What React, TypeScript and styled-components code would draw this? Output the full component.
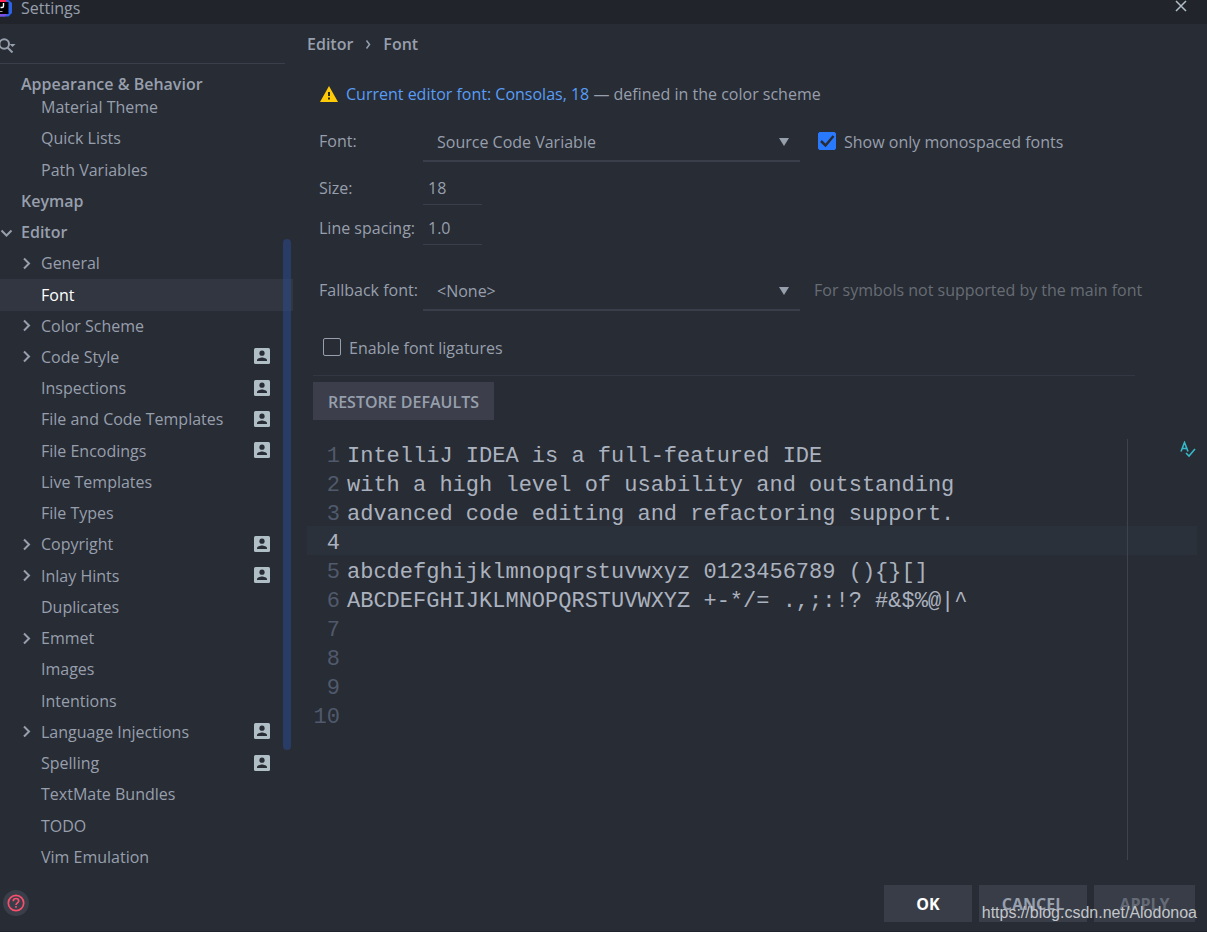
import React from "react";
import styled, { createGlobalStyle, css } from "styled-components";

const ui = `"Open Sans", "Noto Sans", sans-serif`;
const mono = `"Liberation Mono", "Courier New", monospace`;

const Global = createGlobalStyle`
  *, *::before, *::after { box-sizing: border-box; }
  body { margin: 0; background: #282c34; color: #979fad; font: 16px/20px ${ui}; }
  button, input, select, textarea { font: inherit; color: inherit; margin: 0; }
  h1, h2, ul, ol, p { margin: 0; padding: 0; list-style: none; font-size: inherit; }
`;

const Dialog = styled.div`
  min-height: 100vh;
  display: flex;
  flex-direction: column;
  position: relative;
  border-bottom: 1px solid #21252b;
`;

const TitleBar = styled.header`
  height: 24px;
  display: flex;
  align-items: flex-start;
  background: #21252b;
  h1 { font-weight: 400; line-height: 16px; margin-left: 9px; flex: 1; }
`;

const IconButton = styled.button`
  border: 0;
  padding: 0;
  background: none;
  display: flex;
`;

const CloseButton = styled(IconButton)`
  padding: 0 19px 0 0;
`;

const Body = styled.div`
  flex: 1;
  display: flex;
`;

const Sidebar = styled.aside`
  flex: 0 0 293px;
  display: flex;
  flex-direction: column;
  position: relative;
`;

const Search = styled.label`
  height: 40px;
  margin-right: 8px;
  display: flex;
  align-items: center;
  border-bottom: 1px solid #3a3e4a;
  input { flex: 1; min-width: 0; border: 0; background: none; outline: 0; }
`;

const GroupHead = styled.h2`
  height: 28px;
  padding: 10px 0 0 21px;
  line-height: 20px;
  font-weight: 600;
`;

const Tree = styled.ul`
  flex: 1;
  display: flex;
  flex-direction: column;
`;

const Row = styled.li<{ $top?: boolean; $selected?: boolean }>`
  flex: 1 0 31px;
  display: flex;
  align-items: center;
  padding-right: 23px;
  padding-left: ${(p) => (p.$top ? 0 : 20)}px;
  ${(p) => p.$top && css`font-weight: 600;`}
  ${(p) => p.$selected && css`background: #323640; color: #fff;`}
`;

const Twist = styled.span`
  width: 21px;
  display: flex;
`;

const Name = styled.span`
  flex: 1;
  padding-bottom: 1px;
`;

const ScrollThumb = styled.div`
  position: absolute;
  top: 215px;
  bottom: 123px;
  right: 2px;
  width: 8px;
  border-radius: 4px;
  background: rgba(41, 75, 150, 0.5);
`;

const Content = styled.main`
  flex: 1;
  min-width: 0;
  display: flex;
  flex-direction: column;
  padding: 0 10px 13px 14px;
`;

const Crumbs = styled.nav`
  height: 40px;
  display: flex;
  align-items: center;
  gap: 12px;
  font-weight: 600;
`;

const Notice = styled.p`
  height: 60px;
  padding-left: 12px;
  display: flex;
  align-items: center;
  gap: 7px;
  a { color: #589df6; text-decoration: none; }
`;

const Form = styled.div`
  display: grid;
  grid-template-columns: 104px 377px 1fr;
  grid-template-rows: 38px 43px 40px 66px;
  padding-left: 12px;
  align-items: end;
`;

const FieldLabel = styled.label<{ $compact?: boolean }>`
  height: ${(p) => (p.$compact ? 27 : 31)}px;
`;

const SelectBox = styled.div`
  position: relative;
  border-bottom: 2px solid #3a3e4a;
  select {
    appearance: none;
    display: block;
    width: 100%;
    height: 36px;
    padding: 0 30px 0 14px;
    border: 0;
    outline: 0;
    background: none;
  }
  svg { position: absolute; right: 11px; top: 14px; pointer-events: none; }
`;

const NumberInput = styled.input`
  grid-column: 2 / 4;
  width: 59px;
  height: 33px;
  padding: 0 5px;
  border: 0;
  border-bottom: 1px solid #3a3e4a;
  outline: 0;
  background: none;
`;

const CheckLabel = styled.label<{ $inset?: boolean }>`
  height: 30px;
  padding-left: ${(p) => (p.$inset ? 18 : 0)}px;
  display: flex;
  gap: 8px;
  input {
    appearance: none;
    width: 18px;
    height: 18px;
    border: 1px solid #979fad;
    border-radius: 2px;
  }
  input:checked {
    border-color: #2979ff;
    background: #2979ff;
  }
`;

const CheckBox = styled.span`
  position: relative;
  display: flex;
  svg { position: absolute; left: 0; top: 0; }
`;

const Hint = styled.p`
  height: 31px;
  padding-left: 14px;
  color: #676c75;
`;

const Ligatures = styled.div`
  margin: 0 62px 0 6px;
  height: 65px;
  padding: 27px 10px 0;
  border-bottom: 1px solid #323741;
`;

const PushButton = styled.button<{ $width: number; $tone?: string }>`
  width: ${(p) => p.$width}px;
  height: 37px;
  border: 0;
  padding: 2px 0 0;
  background: #383d48;
  font-weight: 700;
  color: ${(p) => p.$tone || "#979fad"};
`;

const RestoreButton = styled(PushButton)`
  height: 38px;
  margin: 6px 0 19px 6px;
  background: #3c3f4b;
  font-weight: 600;
`;

const Editor = styled.section`
  flex: 1;
  display: flex;
  position: relative;
  font: 22px/29px ${mono};
`;

const CurrentLine = styled.div`
  position: absolute;
  top: 87px;
  left: 0;
  right: 0;
  height: 29px;
  background: #2b313a;
`;

const Gutter = styled.ol`
  position: relative;
  width: 33px;
  && { padding-top: 3px; }
  display: flex;
  flex-direction: column;
  align-items: flex-end;
`;

const LineNumber = styled.li<{ $current?: boolean }>`
  color: ${(p) => (p.$current ? "#abb2bf" : "#505a6c")};
`;

const CodeArea = styled.textarea`
  position: relative;
  flex: 1;
  min-width: 0;
  padding: 3px 0 0 7px;
  border: 0;
  border-right: 1px solid #3f434c;
  outline: 0;
  resize: none;
  overflow: hidden;
  background: none;
  color: #abb2bf;
  white-space: pre;
`;

const Stripe = styled.div`
  position: relative;
  display: flex;
  align-items: flex-start;
  width: 69px;
  padding: 2px 0 0 52px;
`;

const Footer = styled.footer`
  height: 58px;
  display: flex;
  align-items: center;
  gap: 7px;
  padding: 2px 12px 0 3px;
`;

const HelpButton = styled(IconButton)`
  margin-right: auto;
`;

const Watermark = styled.div`
  position: absolute;
  right: 10px;
  bottom: 8px;
  color: #c3c6cb;
  font: 16px/20px "Liberation Sans", Arial, sans-serif;
  pointer-events: none;
`;

type Item = { name: string; top?: boolean; twist?: "open" | "closed"; badge?: boolean; selected?: boolean };

const items: Item[] = [
  { name: "Material Theme" },
  { name: "Quick Lists" },
  { name: "Path Variables" },
  { name: "Keymap", top: true },
  { name: "Editor", top: true, twist: "open" },
  { name: "General", twist: "closed" },
  { name: "Font", selected: true },
  { name: "Color Scheme", twist: "closed" },
  { name: "Code Style", twist: "closed", badge: true },
  { name: "Inspections", badge: true },
  { name: "File and Code Templates", badge: true },
  { name: "File Encodings", badge: true },
  { name: "Live Templates" },
  { name: "File Types" },
  { name: "Copyright", twist: "closed", badge: true },
  { name: "Inlay Hints", twist: "closed", badge: true },
  { name: "Duplicates" },
  { name: "Emmet", twist: "closed" },
  { name: "Images" },
  { name: "Intentions" },
  { name: "Language Injections", twist: "closed", badge: true },
  { name: "Spelling", badge: true },
  { name: "TextMate Bundles" },
  { name: "TODO" },
  { name: "Vim Emulation" },
];

const sample = `IntelliJ IDEA is a full-featured IDE
with a high level of usability and outstanding
advanced code editing and refactoring support.

abcdefghijklmnopqrstuvwxyz 0123456789 (){}[]
ABCDEFGHIJKLMNOPQRSTUVWXYZ +-*/= .,;:!? #&$%@|^`;

const Chevron = ({ open }: { open?: boolean }) => (
  <svg width="13" height="14" viewBox="0 0 13 14" fill="none" stroke="#979fad" strokeWidth="2">
    <path d={open ? "M1.5 4.5l5 5 5-5" : "M4 1.5l5 5-5 5"} />
  </svg>
);

const Badge = () => (
  <svg width="16" height="18" viewBox="0 0 16 18">
    <rect y="0" width="16" height="16" rx="1.5" fill="#b0bec5" />
    <circle cx="8" cy="5.2" r="2.6" fill="#282c34" />
    <path d="M3 13v-.8c0-1.8 3.3-2.7 5-2.7s5 .9 5 2.7v.8z" fill="#282c34" />
  </svg>
);

const Arrow = () => (
  <svg width="10" height="8" viewBox="0 0 10 8"><path d="M0 0h10L5 8z" fill="#979fad" /></svg>
);

export default function App() {
  return (
    <>
      <Global />
      <Dialog>
        <TitleBar>
          <svg width="12" height="17" viewBox="0 0 12 17">
            <path d="M0 0h8.500L12 3v10l-3.500 3.500H0z" fill="#2b62e8" />
            <path d="M0 0h6l1 3H0z" fill="#fe2857" />
            <path d="M0 13h8l-3 3.500H0z" fill="#7b4fe0" />
            <path d="M0 2h8.500v12H0z" fill="#000" />
            <path d="M0 11.500h2.500" stroke="#aaa" />
            <path d="M3.500 3v3q0 1.500-1.500 1.500H.5" fill="none" stroke="#fff" strokeWidth="1.400" />
          </svg>
          <h1>Settings</h1>
          <CloseButton aria-label="Close">
            <svg width="14" height="13" viewBox="0 0 14 13" stroke="#b0bec5" strokeWidth="1.500">
              <path d="M2 1l10 10M12 1L2 11" />
            </svg>
          </CloseButton>
        </TitleBar>
        <Body>
          <Sidebar>
            <Search>
              <svg width="17" height="18" viewBox="0 0 17 18" fill="none" stroke="#979fad" strokeWidth="2">
                <circle cx="4.200" cy="9" r="4.800" />
                <path d="M7.500 12.500l5 5" />
                <path d="M9.500 9h6l-3 3z" fill="#979fad" stroke="none" />
              </svg>
              <input aria-label="Search settings" />
            </Search>
            <GroupHead>Appearance &amp; Behavior</GroupHead>
            <Tree>
              {items.map((it) => (
                <Row key={it.name} $top={it.top} $selected={it.selected}>
                  <Twist>{it.twist && <Chevron open={it.twist === "open"} />}</Twist>
                  <Name>{it.name}</Name>
                  {it.badge && <Badge />}
                </Row>
              ))}
            </Tree>
            <ScrollThumb />
          </Sidebar>
          <Content>
            <Crumbs>
              <span>Editor</span>
              <svg width="6" height="10" viewBox="0 0 6 10" fill="none" stroke="#979fad" strokeWidth="1.500">
                <path d="M1.500 1.500l3 4-3 4" />
              </svg>
              <span>Font</span>
            </Crumbs>
            <Notice>
              <svg width="20" height="18" viewBox="0 0 20 18">
                <path d="M10 1l9 16H1z" fill="#ffca06" />
                <path d="M10 7v4M10 12.500v2" stroke="#282c34" strokeWidth="2" />
              </svg>
              <span><a href="#scheme">Current editor font: Consolas, 18</a> — defined in the color scheme</span>
            </Notice>
            <Form>
              <FieldLabel htmlFor="font">Font:</FieldLabel>
              <SelectBox>
                <select id="font"><option>Source Code Variable</option></select>
                <Arrow />
              </SelectBox>
              <CheckLabel $inset>
                <CheckBox>
                  <input type="checkbox" defaultChecked />
                  <svg width="18" height="18" viewBox="0 0 18 18" fill="none" stroke="#282c34" strokeWidth="2.500">
                    <path d="M3 9l4.500 4.500L15.500 4" />
                  </svg>
                </CheckBox>
                Show only monospaced fonts
              </CheckLabel>
              <FieldLabel $compact htmlFor="size">Size:</FieldLabel>
              <NumberInput id="size" defaultValue="18" />
              <FieldLabel $compact htmlFor="spacing">Line spacing:</FieldLabel>
              <NumberInput id="spacing" defaultValue="1.0" />
              <FieldLabel htmlFor="fallback">Fallback font:</FieldLabel>
              <SelectBox>
                <select id="fallback"><option>&lt;None&gt;</option></select>
                <Arrow />
              </SelectBox>
              <Hint>For symbols not supported by the main font</Hint>
            </Form>
            <Ligatures>
              <CheckLabel>
                <input type="checkbox" />
                Enable font ligatures
              </CheckLabel>
            </Ligatures>
            <RestoreButton $width={181}>RESTORE DEFAULTS</RestoreButton>
            <Editor>
              <CurrentLine />
              <Gutter>
                {Array.from({ length: 10 }, (_, i) => (
                  <LineNumber key={i} $current={i === 3}>{i + 1}</LineNumber>
                ))}
              </Gutter>
              <CodeArea aria-label="Font preview" spellCheck={false} defaultValue={sample} />
              <Stripe>
                <svg width="16" height="17" viewBox="0 0 16 17" fill="none" stroke="#35b8c8" strokeWidth="1.600">
                  <path d="M1 10.500L4.500 1.500 8 10.500M2.300 7.500h4.500" />
                  <path d="M6 12l3 3 6-7" />
                </svg>
              </Stripe>
            </Editor>
          </Content>
        </Body>
        <Footer>
          <HelpButton aria-label="Help">
            <svg width="26" height="26" viewBox="0 0 26 26" fill="none" stroke="#f7506e" strokeWidth="1.700">
              <circle cx="13" cy="13" r="13" fill="#3a3e49" stroke="none" />
              <circle cx="13" cy="13" r="7.700" />
              <path d="M10.300 11.200q0-2.700 2.700-2.700t2.700 2.500c0 1.700-2.700 2-2.700 4M13 16v1.700" />
            </svg>
          </HelpButton>
          <PushButton $width={88} $tone="#fff">OK</PushButton>
          <PushButton $width={108}>CANCEL</PushButton>
          <PushButton $width={101} $tone="#656b76">APPLY</PushButton>
        </Footer>
        <Watermark>https://blog.csdn.net/Alodonoa</Watermark>
      </Dialog>
    </>
  );
}
